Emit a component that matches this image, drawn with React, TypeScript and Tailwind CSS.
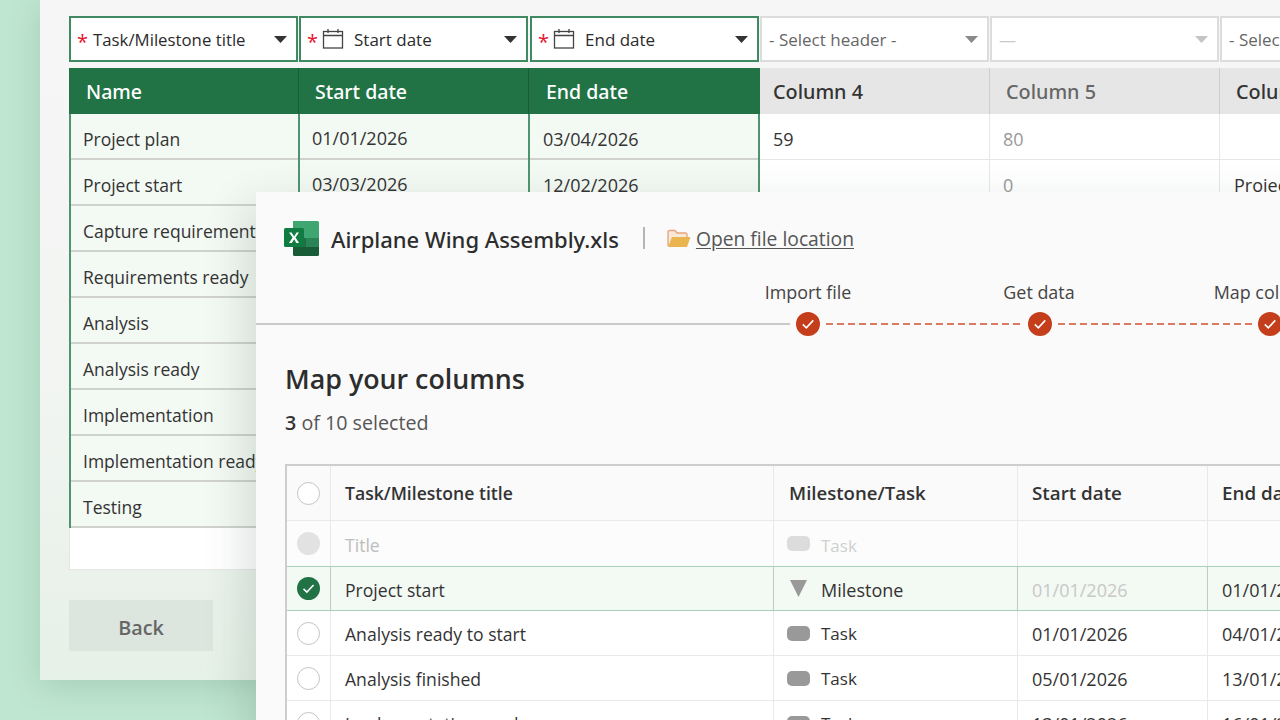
import { ReactNode } from 'react';

const FONT = "font-['Open_Sans','Noto_Sans',sans-serif]";
const HEAD = "font-['Noto_Sans','Open_Sans',sans-serif] font-medium";

const backRows = [
  ['Project plan', '01/01/2026', '03/04/2026', '59', '80', ''],
  ['Project start', '03/03/2026', '12/02/2026', '', '0', 'Project'],
  ['Capture requirements', '', '', '', '', ''],
  ['Requirements ready', '', '', '', '', ''],
  ['Analysis', '', '', '', '', ''],
  ['Analysis ready', '', '', '', '', ''],
  ['Implementation', '', '', '', '', ''],
  ['Implementation ready', '', '', '', '', ''],
  ['Testing', '', '', '', '', ''],
];

const frontRows = [
  { name: 'Analysis ready to start', start: '01/01/2026', end: '04/01/2026' },
  { name: 'Analysis finished', start: '05/01/2026', end: '13/01/2026' },
  { name: 'Implementation ready', start: '13/01/2026', end: '16/01/2026' },
];

const Caret = ({ color = '#333' }: { color?: string }) => (
  <svg width="13" height="7" viewBox="0 0 13 7" className="shrink-0">
    <path d="M0 0h13L6.5 7z" fill={color} />
  </svg>
);

const Calendar = () => (
  <svg width="22" height="20" viewBox="0 0 22 20" fill="none" stroke="#444" strokeWidth="1.3" className="shrink-0">
    <rect x="1.500" y="2.500" width="19" height="16.500" />
    <path d="M1.500 6.500h19M6 0v4M16 0v4" />
  </svg>
);

const Star = () => <span className="text-[#e8112d] text-[20px] leading-none mt-[5px]">*</span>;

const MappedSelect = ({ label, calendar, className = '' }: { label: string; calendar?: boolean; className?: string }) => (
  <div className={`w-[229px] h-[46px] shrink-0 bg-white border-2 border-[#3f8a62] flex items-center pl-[6px] pr-[9px] ${className}`}>
    <Star />
    {calendar ? (
      <span className="ml-[4px]"><Calendar /></span>
    ) : null}
    <span className={`${calendar ? 'ml-[10px] text-[17px]' : 'ml-[5px] text-[16.800px]'} flex-1 pt-[2px] text-[#2b2b2b] whitespace-nowrap`}>{label}</span>
    <Caret />
  </div>
);

const EmptySelect = ({ label, muted }: { label: string; muted?: boolean }) => (
  <div className="w-[229px] h-[46px] shrink-0 bg-white border-2 border-[#dcdcdc] flex items-center pl-[7px] pr-[9px]">
    <span className={`flex-1 pt-[2px] text-[17px] whitespace-nowrap ${muted ? 'text-[#c8c8c8]' : 'text-[#666]'}`}>{label}</span>
    <Caret color={muted ? '#c4c4c4' : '#8a8a8a'} />
  </div>
);

const Check = ({ size = 24, fill = '#c43e1c' }: { size?: number; fill?: string }) => (
  <svg width={size} height={size} viewBox="0 0 24 24" className="shrink-0">
    <circle cx="12" cy="12" r="12" fill={fill} />
    <path d="M6.800 12.400l3.500 3.400 7-7.400" fill="none" stroke="#fff" strokeWidth="1.600" />
  </svg>
);

const DashedLine = ({ width }: { width: number }) => (
  <svg width={width} height="2" className="shrink-0">
    <line x1="0" y1="1" x2={width} y2="1" stroke="#d0512f" strokeWidth="1.500" strokeDasharray="7 4" />
  </svg>
);

const ExcelLogo = () => (
  <svg width="36" height="36" viewBox="0 0 36 36" className="shrink-0">
    <path d="M9 1h24.500A1.500 1.500 0 0 1 35 2.500V18H9z" fill="#3fa671" />
    <rect x="22" y="18" width="13" height="9" fill="#2a8456" />
    <rect x="9" y="18" width="13" height="9" fill="#1e7145" />
    <path d="M9 27h26v7.500a1.500 1.500 0 0 1-1.500 1.500h-23A1.500 1.500 0 0 1 9 34.500z" fill="#185c37" />
    <rect x="0" y="8" width="20" height="19" rx="1.500" fill="#107c41" />
    <path d="M5 12.500h2.700l2.400 3.900 2.400-3.900H15l-3.500 5 3.600 5.500h-2.800l-2.200-3.800-2.300 3.800H5l3.600-5.500z" fill="#fff" />
  </svg>
);

const Folder = () => (
  <svg width="24" height="19" viewBox="0 0 24 19" className="shrink-0">
    <path d="M1 17V3a1.500 1.500 0 0 1 1.500-1.500h5.500L10 4h8.500A1.500 1.500 0 0 1 20 5.500V8" fill="#f7e9d8" stroke="#e8a27c" strokeWidth="1.300" />
    <path d="M5 8h18.500l-3.500 10H1z" fill="#eab54f" />
  </svg>
);

const TaskShape = ({ color = '#999' }: { color?: string }) => (
  <span className="w-[23px] h-[15px] rounded-[5px] shrink-0" style={{ background: color }} />
);

const Radio = () => <span className="w-[23px] h-[23px] rounded-full bg-white border-[1.500px] border-[#c4c4c4]" />;

const FrontRow = ({
  className,
  check,
  type,
  cells,
  lineColor = 'border-[#e6eae8]',
  textPad = 'pt-[4px]',
}: {
  className: string;
  check: ReactNode;
  type: ReactNode;
  cells: ReactNode[];
  lineColor?: string;
  textPad?: string;
}) => (
  <div className={`flex items-stretch ${className}`}>
    <div className={`w-[44px] shrink-0 border-r ${lineColor} flex items-center justify-center`}>{check}</div>
    <div className={`w-[443px] shrink-0 border-r ${lineColor} pl-[14px] flex items-center whitespace-nowrap`}><span className={`text-[17.600px] ${textPad}`}>{cells[0]}</span></div>
    <div className={`w-[244px] shrink-0 border-r ${lineColor} pl-[13px] flex items-center gap-[11px]`}>{type}</div>
    <div className={`w-[190px] shrink-0 border-r ${lineColor} pl-[14px] flex items-center`}><span className={textPad}>{cells[1]}</span></div>
    <div className="flex-1 pl-[14px] flex items-center whitespace-nowrap"><span className={textPad}>{cells[2]}</span></div>
  </div>
);

export default function App() {
  return (
    <div className={`${FONT} relative w-[1280px] h-[720px] overflow-hidden bg-[#bfe6d0] antialiased`}>
      {/* Sheet preview behind the dialog */}
      <div className="ml-[40px] h-[680px] pt-[16px] pl-[29px] bg-gradient-to-b from-[#f6f6f6] via-[#f3f5f3] to-[#e6f1e8] shadow-[0_6px_30px_rgba(60,110,85,0.2)] overflow-hidden">
        <div className="flex gap-px w-[1300px]">
          <MappedSelect label="Task/Milestone title" />
          <MappedSelect label="Start date" calendar />
          <MappedSelect label="End date" calendar className="ml-px" />
          <EmptySelect label="- Select header -" />
          <EmptySelect label="—" muted />
          <EmptySelect label="- Select header -" />
        </div>

        <div className="mt-[6px] w-[1300px]">
          <div className={`flex h-[46px] ${HEAD}`}>
            <div className="w-[229px] shrink-0 pl-[17px] pt-[2px] bg-[#217346] text-white text-[19.500px] flex items-center">Name</div>
            <div className="w-[230px] shrink-0 pl-[16px] pt-[2px] border-l border-[#1a5c39] bg-[#217346] text-white text-[19.500px] flex items-center">Start date</div>
            <div className="w-[232px] shrink-0 pl-[17px] pt-[2px] border-l border-[#1a5c39] bg-[#217346] text-white text-[19.500px] flex items-center">End date</div>
            <div className="w-[230px] shrink-0 pl-[13px] pt-[2px] bg-[#e6e6e6] text-[#333] text-[19.800px] flex items-center border-r border-[#cfcfcf]">Column 4</div>
            <div className="w-[230px] shrink-0 pl-[16px] pt-[2px] bg-[#e6e6e6] text-[#666] text-[19.800px] flex items-center border-r border-[#cfcfcf]">Column 5</div>
            <div className="w-[230px] shrink-0 pl-[16px] pt-[2px] bg-[#e6e6e6] text-[#333] text-[19.800px] flex items-center">Column 6</div>
          </div>
          {backRows.map((r, i) => (
            <div key={i} className="flex h-[46px] text-[18px] text-[#333]">
              <div className="w-[229px] shrink-0 pl-[12px] pt-[4px] text-[17.500px] bg-[#f3f9f3] border-l-2 border-l-[#4f9470] shadow-[inset_0_-2px_0_#cfd2cf] flex items-center whitespace-nowrap">{r[0]}</div>
              <div className="w-[230px] shrink-0 pl-[12px] pt-[2px] bg-[#f3f9f3] border-l-2 border-l-[#4f9470] shadow-[inset_0_-2px_0_#cfd2cf] flex items-center">{r[1]}</div>
              <div className="w-[232px] shrink-0 pl-[13px] pt-[4px] bg-[#f3f9f3] border-x-2 border-x-[#4f9470] shadow-[inset_0_-2px_0_#cfd2cf] flex items-center">{r[2]}</div>
              <div className="w-[230px] shrink-0 pl-[13px] pt-[5px] bg-white border-b border-r border-[#e6e6e6] flex items-center">{r[3]}</div>
              <div className="w-[230px] shrink-0 pl-[13px] pt-[5px] bg-white border-b border-r border-[#e6e6e6] text-[#999] flex items-center">{r[4]}</div>
              <div className="w-[230px] shrink-0 pl-[14px] pt-[5px] bg-white border-b border-[#e6e6e6] flex items-center">{r[5]}</div>
            </div>
          ))}
          <div className="-mt-[2px] h-[44px] w-[1150px] bg-white border border-[#e4e8e5] border-t-2 border-t-[#6fae8c]" />
        </div>

        <button className="mt-[30px] w-[144px] h-[51px] pt-[4px] bg-[#dde5df] text-[#666] text-[19.800px] font-semibold">Back</button>
      </div>

      {/* Import dialog, a window lying over the sheet */}
      <div className="absolute left-[256px] top-[192px] w-[1100px] h-[600px] bg-[#fafafa] shadow-[-10px_14px_40px_rgba(40,70,55,0.16)]">
        <div className="flex items-center pl-[28px] pt-[28px] h-[64px]">
          <ExcelLogo />
          <span className={`${HEAD} ml-[11px] pt-[3px] text-[22px] text-[#2d2d2d] whitespace-nowrap`}>Airplane Wing Assembly.xls</span>
          <span className="ml-[24px] w-[2px] h-[22px] bg-[#b5b5b5] shrink-0" />
          <span className="ml-[22px]"><Folder /></span>
          <span className="ml-[5px] pt-[3px] text-[19.300px] text-[#555] underline underline-offset-2 whitespace-nowrap">Open file location</span>
        </div>

        <div className="flex pl-[436px] mt-[23px] text-[17.900px] leading-[26px] text-[#444]">
          <span className="w-[232px] shrink-0 text-center">Import file</span>
          <span className="w-[230px] shrink-0 text-center">Get data</span>
          <span className="w-[232px] shrink-0 text-center whitespace-nowrap">Map columns</span>
        </div>
        <div className="flex items-center mt-[7px]">
          <div className="w-[534px] h-[2px] bg-[#c9c9c9] shrink-0" />
          <span className="w-[6px] shrink-0" />
          <Check />
          <span className="w-[6px] shrink-0" />
          <DashedLine width={196} />
          <span className="w-[6px] shrink-0" />
          <Check />
          <span className="w-[6px] shrink-0" />
          <DashedLine width={196} />
          <span className="w-[4px] shrink-0" />
          <Check />
        </div>

        <h1 className="ml-[29px] mt-[25px] text-[26.800px] leading-[36px] font-semibold text-[#2d2d2d]">Map your columns</h1>
        <p className="ml-[29px] mt-[12px] text-[19.700px] leading-[28px] text-[#555]"><b className="font-semibold text-[#333]">3</b> of 10 selected</p>

        <div className="ml-[29px] mt-[27px] border-t-2 border-l-2 border-[#cdcdcd] text-[18px] text-[#333]">
          <FrontRow
            className="h-[55px] border-b border-[#e6eae8] font-semibold"
            textPad="pt-[1px]"
            check={<Radio />}
            type={<span className="pl-[2px] text-[18.600px]">Milestone/Task</span>}
            cells={['Task/Milestone title', <span key="s" className="text-[18.800px]">Start date</span>, <span key="e" className="text-[18.800px]">End date</span>]}
          />
          <FrontRow
            className="h-[45px] text-[#bdbdbd] bg-[#fbfcfb]"
            check={<span className="w-[23px] h-[23px] rounded-full bg-[#e2e2e2]" />}
            type={<><TaskShape color="#dcdcdc" /><span className="text-[#d0d0d0] text-[17px] pt-[4px]">Task</span></>}
            cells={['Title', '', '']}
          />
          <FrontRow
            className="h-[45px] bg-[#f3f9f3] border-y border-[#a9d0b9]"
            lineColor="border-[#c4c8c5]"
            check={<Check size={23} fill="#217346" />}
            type={
              <>
                <svg width="23" height="17" viewBox="0 0 23 17" className="shrink-0"><path d="M3 0h17l-8.500 17z" fill="#999" /></svg>
                <span className="pt-[4px]">Milestone</span>
              </>
            }
            cells={['Project start', <span key="s" className="text-[#c8c8c8]">01/01/2026</span>, '01/01/2026']}
          />
          {frontRows.map(r => (
            <FrontRow
              key={r.name}
              className="h-[45px] bg-white border-b border-[#e6eae8]"
              textPad="pt-[2px]"
              check={<Radio />}
              type={<><TaskShape /><span className="text-[17px] pt-[2px]">Task</span></>}
              cells={[r.name, r.start, r.end]}
            />
          ))}
        </div>
      </div>
    </div>
  );
}
